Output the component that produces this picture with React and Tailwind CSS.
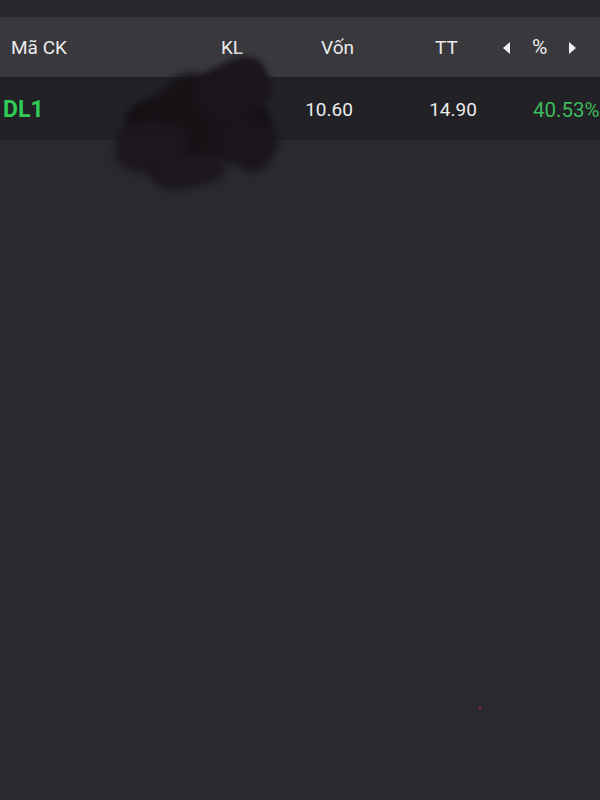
export default function App() {
  return (
    <div className="relative w-[600px] h-[800px] overflow-hidden bg-[#2a292e] text-[19px] text-[#ececec]" style={{ fontFamily: 'Roboto, "Noto Sans", sans-serif' }}>
      <div className="h-[17px] bg-[#29282d]" />

      <div className="grid grid-cols-[180px_105px_105px_110px_100px] h-[60px] pt-[2px] items-center bg-[#39383d]">
        <div className="pl-[11px]">Mã CK</div>
        <div className="text-center pr-[1px]">KL</div>
        <div className="text-center">Vốn</div>
        <div className="text-center pl-[3px]">TT</div>
        <div className="flex items-center pl-[3px]">
          <svg width="7" height="12" viewBox="0 0 7 12" className="fill-[#f2f2f2]">
            <path d="M7 0 L0 6 L7 12 Z" />
          </svg>
          <span className="ml-[22px] text-[21px]">%</span>
          <svg width="7" height="12" viewBox="0 0 7 12" className="ml-[22px] fill-[#f2f2f2]">
            <path d="M0 0 L7 6 L0 12 Z" />
          </svg>
        </div>
      </div>

      <div className="grid grid-cols-[180px_105px_105px_110px_100px] h-[63px] pt-[3px] items-center bg-[#222126]">
        <div className="pl-[3px] text-[23px] font-bold text-[#2fcb57]">DL1</div>
        <div />
        <div className="text-center pr-[17px]">10.60</div>
        <div className="text-center pl-[16px]">14.90</div>
        <div className="pl-[33px] whitespace-nowrap text-[20.5px] text-[#3dba5c]">40.53%</div>
      </div>

      {/* scribble over the KL column */}
      <div className="absolute left-[116px] top-[62px] w-[165px] h-[130px] pointer-events-none">
        <div className="absolute left-[10px] top-[30px] w-[145px] h-[70px] rounded-[40%] bg-[#151115] blur-[3px]" />
        <div className="absolute left-[30px] top-[10px] w-[75px] h-[115px] rounded-[45%] bg-[#161216] blur-[4px] rotate-[20deg]" />
        <div className="absolute left-[80px] top-[0px] w-[75px] h-[55px] rounded-[35%] bg-[#19151a] blur-[3px] -rotate-[25deg]" />
        <div className="absolute left-[0px] top-[60px] w-[70px] h-[50px] rounded-[35%] bg-[#1b171c] blur-[4px]" />
        <div className="absolute left-[100px] top-[55px] w-[60px] h-[50px] rounded-[35%] bg-[#19151a] blur-[4px] rotate-[30deg]" />
        <div className="absolute left-[40px] top-[95px] w-[70px] h-[30px] rounded-[40%] bg-[#1c181d] blur-[4px] -rotate-[10deg]" />
      </div>

      <div className="absolute left-[479px] top-[707px] w-[2px] h-[2px] rounded-full bg-[#d4232b]" />
    </div>
  )
}
